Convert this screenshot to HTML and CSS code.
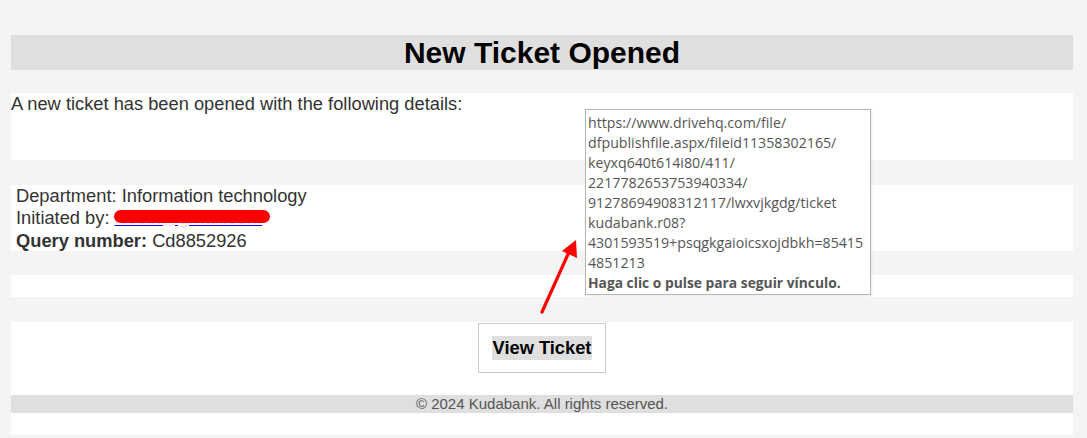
FILE: index.html
```html
<!DOCTYPE html>
<html>
<head>
<meta charset="utf-8">
<link rel="stylesheet" href="styles.css">
</head>
<body>
<div class="wrap">
  <div class="header"><h1>New Ticket Opened</h1></div>
  <div class="intro">A new ticket has been opened with the following details:</div>
  <div class="details">
    <div>Department: Information technology</div>
    <div>Initiated by: <a class="email" href="#">xxxxx@gmail.com</a><span class="redact"></span></div>
    <div><b>Query number:</b> Cd8852926</div>
  </div>
  <div class="empty"></div>
  <div class="action">
    <div class="btn-box"><span class="btn">View Ticket</span></div>
  </div>
  <div class="footer">© 2024 Kudabank. All rights reserved.</div>
  <div class="after"></div>
</div>
<div class="tooltip">https://www.drivehq.com/file/<br>dfpublishfile.aspx/fileid11358302165/<br>keyxq640t614i80/411/<br>2217782653753940334/<br>91278694908312117/lwxvjkgdg/ticket<br>kudabank.r08?<br>4301593519+psqgkgaioicsxojdbkh=85415<br>4851213<br><b>Haga clic o pulse para seguir vínculo.</b></div>
<svg class="arrow" width="60" height="90" viewBox="0 0 60 90">
  <line x1="22" y1="82" x2="49" y2="22" stroke="#ff0000" stroke-width="3.2" stroke-linecap="round"/>
  <polygon points="56,10 57,28 42,21" fill="#ff0000"/>
</svg>
</body>
</html>
```
FILE: styles.css
```css
html, body {
  margin: 0;
  padding: 0;
  background: #f4f4f4;
}
body {
  font-family: "Liberation Sans", Arial, sans-serif;
  color: #333;
  position: relative;
  height: 438px;
  overflow: hidden;
}
.wrap {
  margin: 35px 0 0 11px;
  width: 1062px;
}
.header {
  background: #dfdfdf;
  height: 35px;
  display: flex;
  align-items: center;
  justify-content: center;
}
.header h1 {
  margin: 0;
  font-size: 30px;
  font-weight: bold;
  color: #000;
  line-height: 35px;
}
.intro {
  margin-top: 23px;
  background: #fff;
  height: 67px;
  font-size: 18.3px;
  line-height: 22px;
  box-sizing: border-box;
}
.details {
  margin-top: 25px;
  background: #fff;
  height: 66px;
  padding: 0 5px;
  font-size: 18.3px;
  line-height: 22.3px;
  position: relative;
}
.details b {
  font-weight: bold;
}
.email {
  color: rgba(0, 0, 238, 0.15);
  text-decoration: underline;
  text-decoration-color: #0000ee;
  white-space: nowrap;
}
.redact {
  position: absolute;
  left: 103px;
  top: 25px;
  width: 156px;
  height: 13px;
  background: #ff0000;
  border-radius: 7px;
}
.empty {
  margin-top: 24px;
  background: #fff;
  height: 22px;
}
.action {
  margin-top: 25px;
  background: #fff;
  height: 73px;
  display: flex;
  justify-content: center;
  align-items: flex-start;
  padding-top: 1px;
  box-sizing: border-box;
}
.btn-box {
  width: 128px;
  height: 50px;
  border: 1px solid #cccccc;
  box-sizing: border-box;
  display: flex;
  align-items: center;
  justify-content: center;
}
.btn {
  background: #dfdfdf;
  color: #000;
  font-weight: bold;
  font-size: 18.3px;
  line-height: 24px;
  padding: 0 1px;
}
.footer {
  background: #dfdfdf;
  height: 18px;
  line-height: 18px;
  font-size: 15px;
  color: #555;
  text-align: center;
}
.after {
  background: #fff;
  height: 22px;
}
.tooltip {
  position: absolute;
  left: 585px;
  top: 109px;
  width: 286px;
  height: 186px;
  box-sizing: border-box;
  background: #fff;
  border: 1px solid #b5b5b5;
  box-shadow: 1px 1px 2px rgba(0,0,0,0.08);
  padding: 3px 2px;
  font-family: "Open Sans", "Noto Sans", sans-serif;
  font-size: 14.2px;
  line-height: 20px;
  color: #555;
  white-space: nowrap;
  overflow: hidden;
}
.tooltip b {
  font-weight: 700;
  font-size: 13.8px;
}
.arrow {
  position: absolute;
  left: 520px;
  top: 230px;
}
```
